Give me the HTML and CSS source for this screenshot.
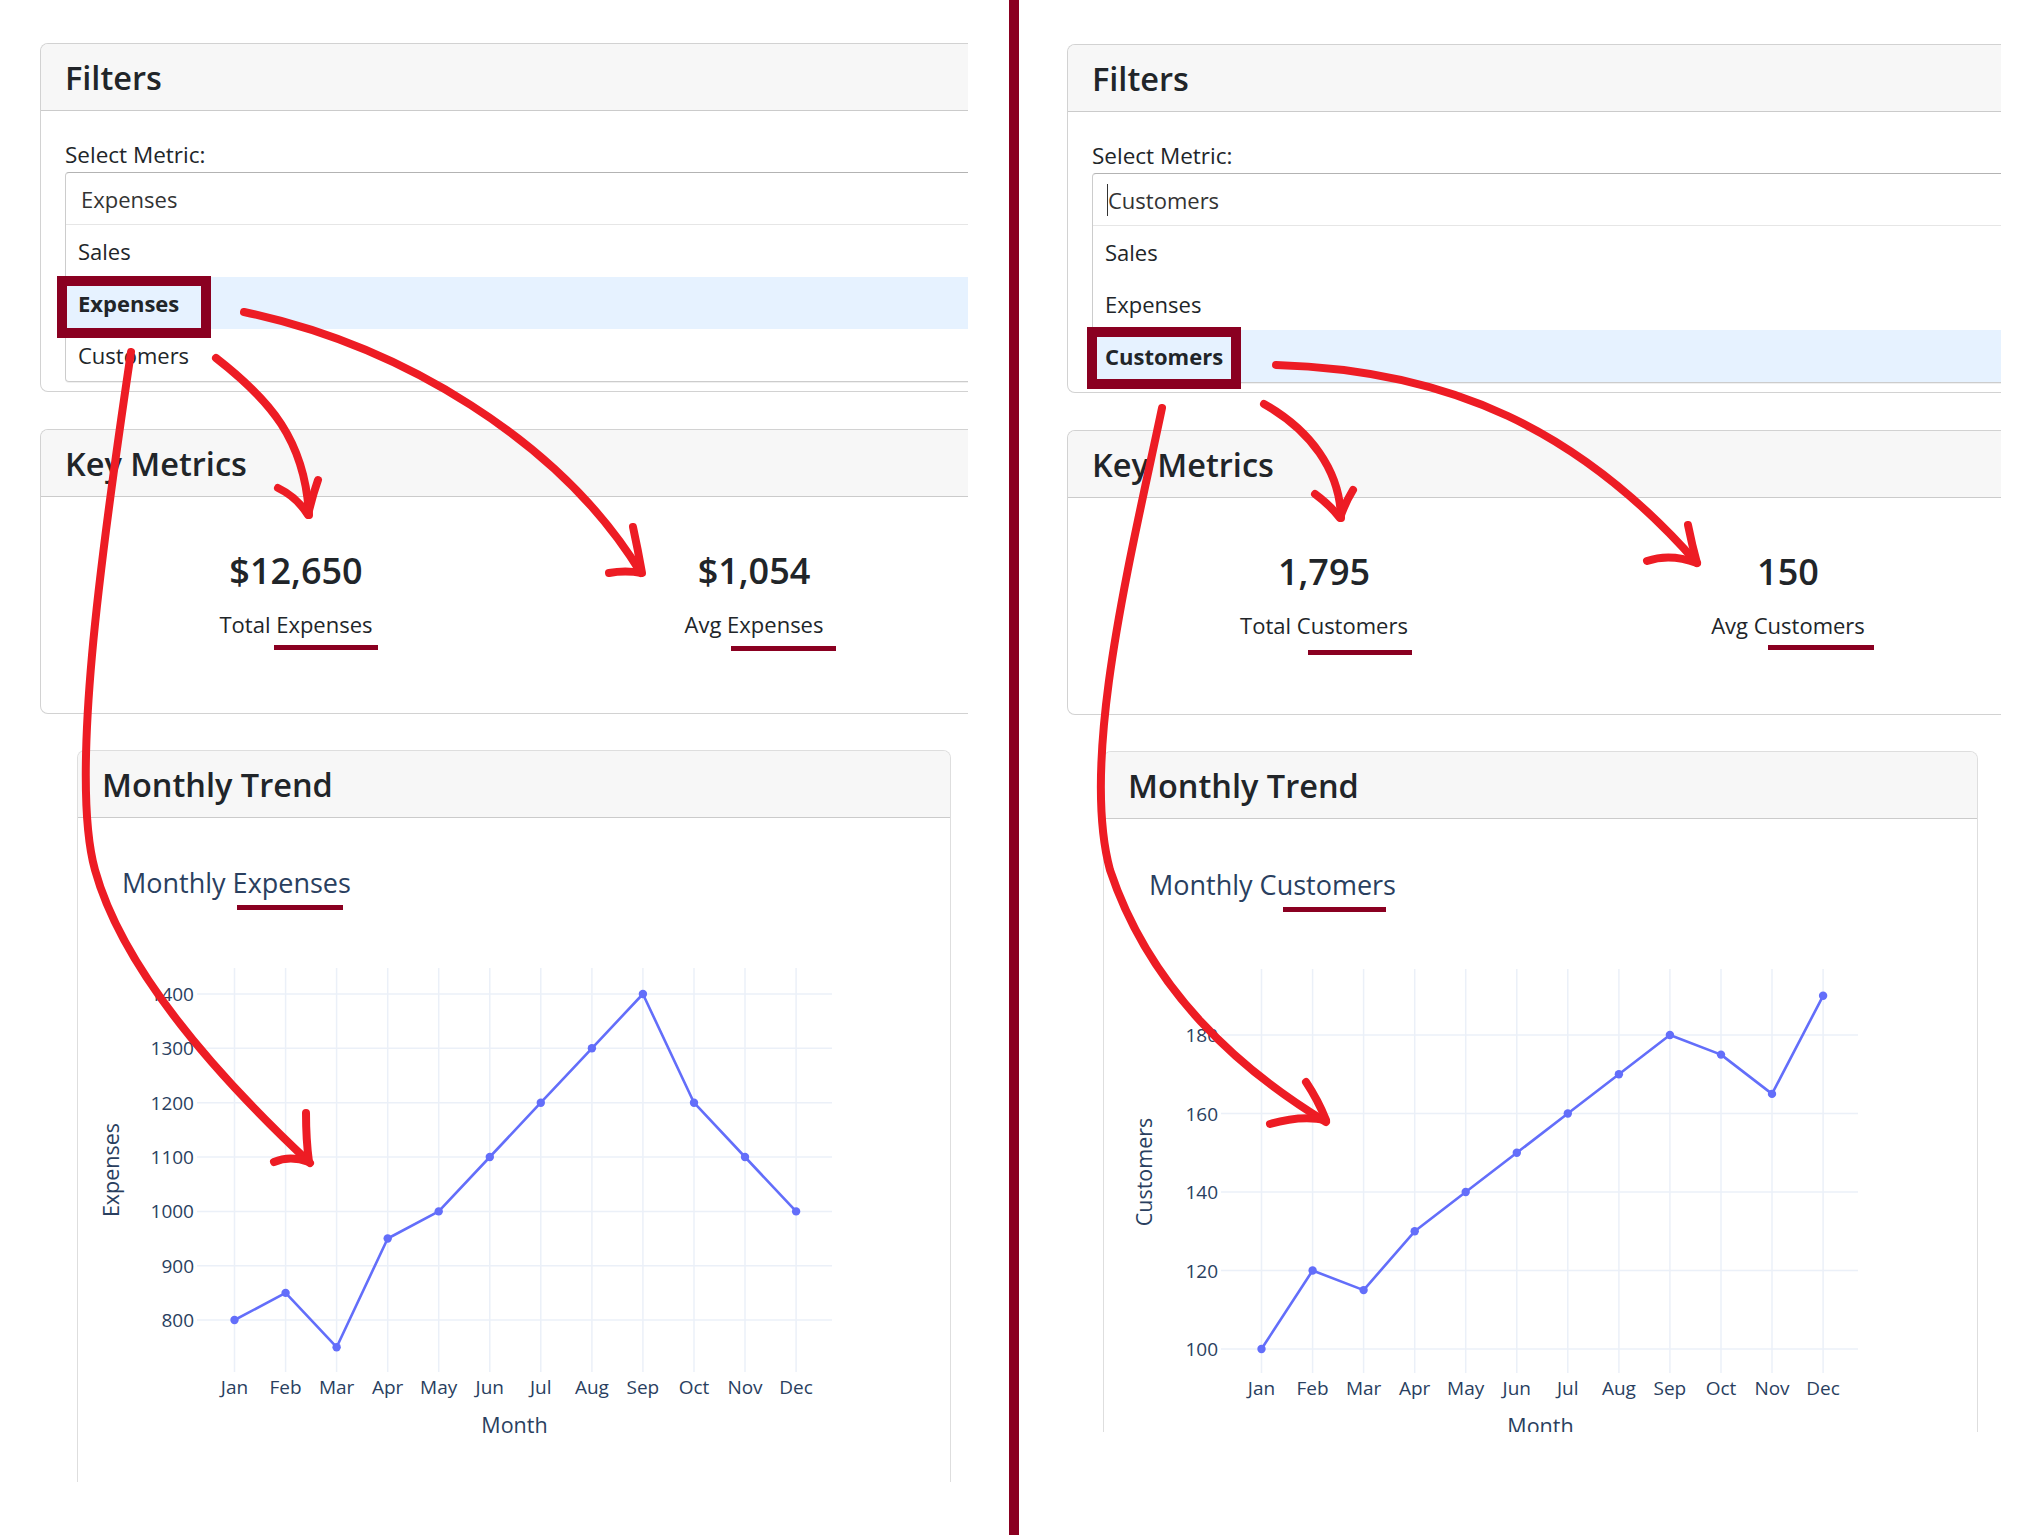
FILE: index.html
```html
<!DOCTYPE html>
<html lang="en">
<head>
<meta charset="utf-8">
<title>Dashboard comparison</title>
<link rel="stylesheet" href="styles.css">
</head>
<body>
<div class="page">
  <section class="panel panel-left">
    <div class="card wide filters">
      <div class="card-header"><h4>Filters</h4></div>
      <div class="card-body filters-body">
        <label class="lbl">Select Metric:</label>
        <div class="dropdown">
          <div class="dd-control"><span class="dd-value">Expenses</span></div>
          <div class="dd-menu">
            <div class="dd-opt">Sales</div>
            <div class="dd-opt focused">Expenses</div>
            <div class="dd-opt">Customers</div>
          </div>
        </div>
      </div>
    </div>
    <div class="card wide metrics">
      <div class="card-header"><h4>Key Metrics</h4></div>
      <div class="card-body metrics-body">
        <div class="metric">
          <div class="value">$12,650</div>
          <div class="mlabel">Total Expenses</div>
        </div>
        <div class="metric">
          <div class="value">$1,054</div>
          <div class="mlabel">Avg Expenses</div>
        </div>
      </div>
    </div>
    <div class="card trend">
      <div class="card-header"><h4>Monthly Trend</h4></div>
      <div class="card-body trend-body">
        <svg class="chart" width="872" height="720" viewBox="0 0 872 720">
          <text class="ctitle" x="44" y="75">Monthly Expenses</text>
          <g class="grid">
            <line x1="156.5" y1="150" x2="156.5" y2="554"/>
            <line x1="207.6" y1="150" x2="207.6" y2="554"/>
            <line x1="258.6" y1="150" x2="258.6" y2="554"/>
            <line x1="309.7" y1="150" x2="309.7" y2="554"/>
            <line x1="360.7" y1="150" x2="360.7" y2="554"/>
            <line x1="411.8" y1="150" x2="411.8" y2="554"/>
            <line x1="462.8" y1="150" x2="462.8" y2="554"/>
            <line x1="513.9" y1="150" x2="513.9" y2="554"/>
            <line x1="564.9" y1="150" x2="564.9" y2="554"/>
            <line x1="616.0" y1="150" x2="616.0" y2="554"/>
            <line x1="667.0" y1="150" x2="667.0" y2="554"/>
            <line x1="718.1" y1="150" x2="718.1" y2="554"/>
            <line x1="119" y1="176" x2="754" y2="176"/>
            <line x1="119" y1="230.3" x2="754" y2="230.3"/>
            <line x1="119" y1="284.7" x2="754" y2="284.7"/>
            <line x1="119" y1="339" x2="754" y2="339"/>
            <line x1="119" y1="393.4" x2="754" y2="393.4"/>
            <line x1="119" y1="447.7" x2="754" y2="447.7"/>
            <line x1="119" y1="502" x2="754" y2="502"/>
          </g>
          <g class="yt">
            <text x="116" y="183">1400</text>
            <text x="116" y="237.3">1300</text>
            <text x="116" y="291.7">1200</text>
            <text x="116" y="346">1100</text>
            <text x="116" y="400.4">1000</text>
            <text x="116" y="454.7">900</text>
            <text x="116" y="509">800</text>
          </g>
          <g class="xt">
            <text x="156.5" y="575.5">Jan</text>
            <text x="207.6" y="575.5">Feb</text>
            <text x="258.6" y="575.5">Mar</text>
            <text x="309.7" y="575.5">Apr</text>
            <text x="360.7" y="575.5">May</text>
            <text x="411.8" y="575.5">Jun</text>
            <text x="462.8" y="575.5">Jul</text>
            <text x="513.9" y="575.5">Aug</text>
            <text x="564.9" y="575.5">Sep</text>
            <text x="616.0" y="575.5">Oct</text>
            <text x="667.0" y="575.5">Nov</text>
            <text x="718.1" y="575.5">Dec</text>
          </g>
          <text class="axt" x="436.5" y="615">Month</text>
          <text class="axt" transform="translate(41,352) rotate(-90)">Expenses</text>
          <polyline class="line" points="156.5,502 207.6,474.9 258.6,529.2 309.7,420.5 360.7,393.4 411.8,339 462.8,284.7 513.9,230.3 564.9,176 616,284.7 667,339 718.1,393.4"/>
          <g class="pts">
            <circle cx="156.5" cy="502" r="4.2"/>
            <circle cx="207.6" cy="474.9" r="4.2"/>
            <circle cx="258.6" cy="529.2" r="4.2"/>
            <circle cx="309.7" cy="420.5" r="4.2"/>
            <circle cx="360.7" cy="393.4" r="4.2"/>
            <circle cx="411.8" cy="339" r="4.2"/>
            <circle cx="462.8" cy="284.7" r="4.2"/>
            <circle cx="513.9" cy="230.3" r="4.2"/>
            <circle cx="564.9" cy="176" r="4.2"/>
            <circle cx="616" cy="284.7" r="4.2"/>
            <circle cx="667" cy="339" r="4.2"/>
            <circle cx="718.1" cy="393.4" r="4.2"/>
          </g>
        </svg>
      </div>
    </div>
  </section>

  <div class="gap"></div>
  <div class="divider"></div>

  <section class="panel panel-right">
    <div class="card wide filters">
      <div class="card-header"><h4>Filters</h4></div>
      <div class="card-body filters-body">
        <label class="lbl">Select Metric:</label>
        <div class="dropdown">
          <div class="dd-control"><span class="caret"></span><span class="dd-value">Customers</span></div>
          <div class="dd-menu">
            <div class="dd-opt">Sales</div>
            <div class="dd-opt">Expenses</div>
            <div class="dd-opt focused">Customers</div>
          </div>
        </div>
      </div>
    </div>
    <div class="card wide metrics">
      <div class="card-header"><h4>Key Metrics</h4></div>
      <div class="card-body metrics-body">
        <div class="metric">
          <div class="value">1,795</div>
          <div class="mlabel">Total Customers</div>
        </div>
        <div class="metric">
          <div class="value">150</div>
          <div class="mlabel">Avg Customers</div>
        </div>
      </div>
    </div>
    <div class="card trend">
      <div class="card-header"><h4>Monthly Trend</h4></div>
      <div class="card-body trend-body">
        <svg class="chart" width="873" height="720" viewBox="0 0 873 720">
          <text class="ctitle" x="45" y="75.5">Monthly Customers</text>
          <g class="grid">
            <line x1="157.5" y1="150" x2="157.5" y2="554"/>
            <line x1="208.6" y1="150" x2="208.6" y2="554"/>
            <line x1="259.6" y1="150" x2="259.6" y2="554"/>
            <line x1="310.7" y1="150" x2="310.7" y2="554"/>
            <line x1="361.7" y1="150" x2="361.7" y2="554"/>
            <line x1="412.8" y1="150" x2="412.8" y2="554"/>
            <line x1="463.8" y1="150" x2="463.8" y2="554"/>
            <line x1="514.9" y1="150" x2="514.9" y2="554"/>
            <line x1="565.9" y1="150" x2="565.9" y2="554"/>
            <line x1="617.0" y1="150" x2="617.0" y2="554"/>
            <line x1="668.0" y1="150" x2="668.0" y2="554"/>
            <line x1="719.1" y1="150" x2="719.1" y2="554"/>
            <line x1="117" y1="216" x2="754" y2="216"/>
            <line x1="117" y1="294.5" x2="754" y2="294.5"/>
            <line x1="117" y1="373" x2="754" y2="373"/>
            <line x1="117" y1="451.5" x2="754" y2="451.5"/>
            <line x1="117" y1="530" x2="754" y2="530"/>
          </g>
          <g class="yt">
            <text x="114" y="223">180</text>
            <text x="114" y="301.5">160</text>
            <text x="114" y="380">140</text>
            <text x="114" y="458.5">120</text>
            <text x="114" y="537">100</text>
          </g>
          <g class="xt">
            <text x="157.5" y="575.5">Jan</text>
            <text x="208.6" y="575.5">Feb</text>
            <text x="259.6" y="575.5">Mar</text>
            <text x="310.7" y="575.5">Apr</text>
            <text x="361.7" y="575.5">May</text>
            <text x="412.8" y="575.5">Jun</text>
            <text x="463.8" y="575.5">Jul</text>
            <text x="514.9" y="575.5">Aug</text>
            <text x="565.9" y="575.5">Sep</text>
            <text x="617.0" y="575.5">Oct</text>
            <text x="668.0" y="575.5">Nov</text>
            <text x="719.1" y="575.5">Dec</text>
          </g>
          <text class="axt" x="436.5" y="615">Month</text>
          <text class="axt" transform="translate(48,353) rotate(-90)">Customers</text>
          <polyline class="line" points="157.5,530 208.6,451.5 259.6,471.1 310.7,412.3 361.7,373 412.8,333.8 463.8,294.5 514.9,255.3 565.9,216 617,235.6 668,274.9 719.1,176.8"/>
          <g class="pts">
            <circle cx="157.5" cy="530" r="4.2"/>
            <circle cx="208.6" cy="451.5" r="4.2"/>
            <circle cx="259.6" cy="471.1" r="4.2"/>
            <circle cx="310.7" cy="412.3" r="4.2"/>
            <circle cx="361.7" cy="373" r="4.2"/>
            <circle cx="412.8" cy="333.8" r="4.2"/>
            <circle cx="463.8" cy="294.5" r="4.2"/>
            <circle cx="514.9" cy="255.3" r="4.2"/>
            <circle cx="565.9" cy="216" r="4.2"/>
            <circle cx="617" cy="235.6" r="4.2"/>
            <circle cx="668" cy="274.9" r="4.2"/>
            <circle cx="719.1" cy="176.8" r="4.2"/>
          </g>
        </svg>
      </div>
    </div>
  </section>
</div>

<svg class="annot" width="2043" height="1535" viewBox="0 0 2043 1535" aria-hidden="true">
  <g class="marks">
    <rect x="274" y="645" width="104" height="5"/>
    <rect x="731" y="646" width="105" height="5"/>
    <rect x="237" y="905" width="106" height="5"/>
    <rect x="1308" y="650" width="104" height="5"/>
    <rect x="1768" y="645" width="106" height="5"/>
    <rect x="1283" y="907" width="103" height="5"/>
  </g>
  <g class="boxes">
    <rect x="62" y="281" width="144" height="52"/>
    <rect x="1092" y="332" width="144" height="52"/>
  </g>
  <g class="arrows">
    <path d="M244,312 C400,345 560,440 641,573"/>
    <path d="M633,527 Q638,550 642,573 Q625,570 609,573"/>
    <path d="M216,358 C270,400 305,440 309,515"/>
    <path d="M318,480 Q312,497 308,515 Q297,497 278,488"/>
    <path d="M131,352 C100,560 70,780 95,870 C120,960 200,1060 310,1163"/>
    <path d="M306,1113 Q306,1140 309,1162 Q290,1155 274,1162"/>
    <path d="M1276,365 C1450,370 1580,430 1697,563"/>
    <path d="M1688,525 Q1692,545 1697,563 Q1670,553 1647,561"/>
    <path d="M1264,404 C1310,430 1340,470 1341,518"/>
    <path d="M1353,490 Q1345,503 1340,518 Q1330,505 1315,494"/>
    <path d="M1162,408 C1130,560 1080,760 1110,870 C1150,990 1240,1070 1326,1122"/>
    <path d="M1306,1082 Q1318,1100 1326,1120 Q1300,1115 1270,1124"/>
  </g>
</svg>
</body>
</html>
```

FILE: styles.css
```css
* { box-sizing: border-box; }

html, body {
  margin: 0;
  padding: 0;
}

body {
  width: 2043px;
  height: 1535px;
  overflow: hidden;
  position: relative;
  background: #ffffff;
  font-family: "Open Sans", "Noto Sans", sans-serif;
  color: #212529;
}

.page {
  display: flex;
  height: 1535px;
}

.panel {
  flex: none;
  overflow: hidden;
}

.panel-left {
  width: 968px;
  height: 1482px;
  padding: 43px 0 0 40px;
}

.panel-right {
  width: 982px;
  height: 1432px;
  padding: 44px 0 0 48px;
}

.gap {
  flex: none;
  width: 41px;
}

.divider {
  flex: none;
  width: 10px;
  height: 1535px;
  background: #8a0021;
}

/* cards */
.card {
  background: #ffffff;
  border: 1px solid rgba(0, 0, 0, 0.175);
  border-radius: 8px;
}

.panel-left .wide { width: 970px; }
.panel-right .wide { width: 980px; }

.filters { margin-bottom: 37px; }
.metrics { margin-bottom: 36px; }

.card-header {
  background: #f7f7f7;
  border-bottom: 1px solid rgba(0, 0, 0, 0.175);
  border-radius: 7px 7px 0 0;
  padding: 14px 24px 13px;
}

.card-header h4 {
  margin: 0;
  font-size: 32.5px;
  line-height: 39px;
  font-weight: 600;
  color: #212529;
}

/* filters */
.filters-body {
  padding: 27px 24px 9px;
}

.lbl {
  display: block;
  font-size: 22.5px;
  line-height: 33px;
  margin-bottom: 1px;
}

.dropdown {
  border: 1px solid #cccccc;
  border-top-color: #b3b3b3;
  border-radius: 4px;
  box-shadow: 0 1px 0 rgba(0, 0, 0, 0.06);
  font-size: 22px;
  color: #333333;
}

.dd-control {
  height: 51px;
  display: flex;
  align-items: center;
  padding-left: 15px;
}

.panel-right .dd-control { padding-left: 14px; }

.caret {
  display: inline-block;
  width: 1px;
  height: 32px;
  background: #333333;
}

.dd-menu {
  border-top: 1px solid #e6e6e6;
}

.dd-opt {
  height: 52px;
  display: flex;
  align-items: center;
  padding-left: 12px;
  color: #212529;
}

.dd-opt.focused {
  background: #e6f2ff;
  font-weight: 700;
}

/* metrics */
.metrics-body {
  display: grid;
  grid-template-columns: 1fr 1fr;
  padding: 52px 26px 72px;
}

.panel-right .metrics-body {
  padding-left: 24px;
}

.metric {
  text-align: center;
}

.value {
  font-size: 36px;
  line-height: 43px;
  font-weight: 600;
}

.mlabel {
  margin-top: 16px;
  font-size: 22px;
  line-height: 33px;
}

/* trend */
.trend {
  border-color: rgba(0, 0, 0, 0.13);
}

.panel-left .trend { width: 874px; margin-left: 37px; }
.panel-right .trend { width: 875px; margin-left: 36px; }

.trend-body {
  height: 720px;
}

.chart {
  display: block;
}

.chart text {
  font-family: "Open Sans", "Noto Sans", sans-serif;
  fill: #2a3f5f;
}

.ctitle { font-size: 27px; }

.yt text {
  font-size: 19px;
  text-anchor: end;
}

.xt text {
  font-size: 19px;
  text-anchor: middle;
}

.chart .axt {
  font-size: 21.5px;
  text-anchor: middle;
}

.grid line {
  stroke: #ebf0f8;
  stroke-width: 1.5;
}

.line {
  fill: none;
  stroke: #636efa;
  stroke-width: 2.6;
  stroke-linejoin: round;
}

.pts circle {
  fill: #636efa;
}

/* annotation overlay */
.annot {
  position: absolute;
  left: 0;
  top: 0;
  pointer-events: none;
}

.marks rect { fill: #8a0021; }

.boxes rect {
  fill: none;
  stroke: #8a0021;
  stroke-width: 10;
}

.arrows path {
  fill: none;
  stroke: #ed1c24;
  stroke-width: 8;
  stroke-linecap: round;
  stroke-linejoin: round;
}
```
